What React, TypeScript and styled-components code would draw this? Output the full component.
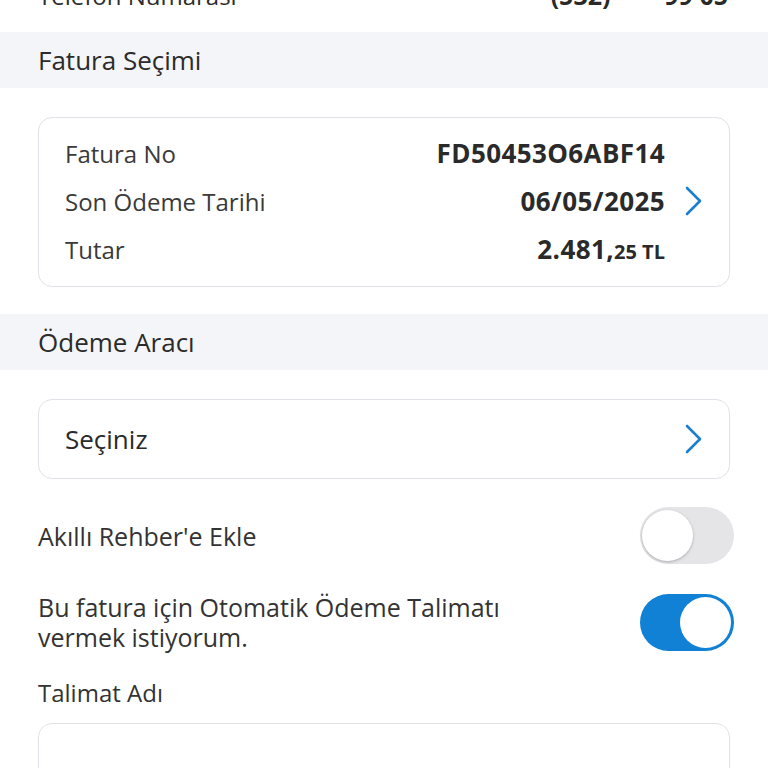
import React from 'react';
import styled, { createGlobalStyle } from 'styled-components';

const GlobalStyle = createGlobalStyle`
  html, body {
    margin: 0;
    padding: 0;
    background: #ffffff;
    font-family: 'Open Sans', 'Noto Sans', sans-serif;
    color: #2d2d2d;
    overflow: hidden;
  }
`;

const Page = styled.div`
  width: 768px;
  height: 768px;
  overflow: hidden;
  display: flex;
  flex-direction: column;

  & > * {
    flex-shrink: 0;
  }
`;

// scrolled list: only the bottom of the phone row is still visible
const TopRow = styled.div`
  display: flex;
  justify-content: space-between;
  align-items: center;
  margin-top: -42px;
  height: 74px;
  padding: 0 40px 0 38px;
  font-size: 24px;
`;

const TopValue = styled.span`
  font-weight: 700;
  font-size: 25px;
  color: #2a2a2a;
`;

const SectionHeader = styled.div<{ $mt?: number }>`
  background: #f4f5f8;
  height: 56px;
  margin-top: ${({ $mt }) => $mt ?? 0}px;
  display: flex;
  align-items: center;
  padding: 0 38px;
  font-size: 26px;
  color: #2b2b2b;
`;

const Card = styled.div<{ $mt: number; $h: number }>`
  margin: ${({ $mt }) => $mt}px 38px 0 38px;
  height: ${({ $h }) => $h}px;
  box-sizing: border-box;
  border: 1.5px solid #dfe2e6;
  border-radius: 14px;
  background: #fff;
`;

const InfoList = styled.div`
  display: flex;
  flex-direction: column;
  padding: 11px 26px 0 26px;
`;

const InfoRow = styled.div`
  display: grid;
  grid-template-columns: 1fr auto 38px;
  align-items: center;
  height: 48px;
  font-size: 24px;
`;

const Label = styled.span`
  color: #3a3a3a;
`;

const Value = styled.span`
  font-weight: 700;
  font-size: 26px;
  letter-spacing: 0.4px;
  color: #2a2a2a;
  text-align: right;
`;

const Small = styled.span`
  font-size: 20px;
  letter-spacing: 0;
`;

const ChevronCell = styled.span`
  display: flex;
  justify-content: flex-end;
  align-items: center;
`;

const SelectInner = styled.div`
  display: flex;
  align-items: center;
  justify-content: space-between;
  height: 100%;
  padding: 0 26px 0 26px;
  font-size: 26px;
  font-weight: 500;
  color: #2a2a2a;
`;

const ToggleRow = styled.div<{ $mt: number }>`
  display: flex;
  align-items: center;
  justify-content: space-between;
  margin-top: ${({ $mt }) => $mt}px;
  padding: 0 34px 0 38px;
  font-size: 25px;
  line-height: 30px;
  color: #333;
`;

const Track = styled.div<{ $on: boolean }>`
  position: relative;
  width: 94px;
  height: 57px;
  flex-shrink: 0;
  border-radius: 29px;
  background: ${({ $on }) => ($on ? '#1181d6' : '#e5e5e8')};
`;

const Knob = styled.div<{ $on: boolean }>`
  position: absolute;
  top: 3px;
  left: ${({ $on }) => ($on ? '40px' : '2px')};
  width: 51px;
  height: 51px;
  border-radius: 50%;
  background: #fff;
  box-shadow: ${({ $on }) => ($on ? 'none' : '0 1px 3px rgba(0,0,0,0.25)')};
`;

const FieldLabel = styled.div`
  margin-top: 24px;
  padding: 0 38px;
  font-size: 24px;
  color: #333;
`;

const Chevron = () => (
  <svg width="20" height="30" viewBox="0 0 20 30" fill="none">
    <path d="M4 2 L17 15 L4 28" stroke="#1a7fd0" strokeWidth="2.6" strokeLinecap="round" strokeLinejoin="round" />
  </svg>
);

const Toggle: React.FC<{ on: boolean }> = ({ on }) => (
  <Track $on={on}>
    <Knob $on={on} />
  </Track>
);

export default function App() {
  return (
    <Page>
      <GlobalStyle />
      <TopRow>
        <span>Telefon Numarası</span>
        <TopValue>(532) *** 99 05</TopValue>
      </TopRow>

      <SectionHeader>Fatura Seçimi</SectionHeader>

      <Card $mt={29} $h={170}>
        <InfoList>
          <InfoRow>
            <Label>Fatura No</Label>
            <Value>FD50453O6ABF14</Value>
            <ChevronCell />
          </InfoRow>
          <InfoRow>
            <Label>Son Ödeme Tarihi</Label>
            <Value>06/05/2025</Value>
            <ChevronCell>
              <Chevron />
            </ChevronCell>
          </InfoRow>
          <InfoRow>
            <Label>Tutar</Label>
            <Value>
              2.481,<Small>25 TL</Small>
            </Value>
            <ChevronCell />
          </InfoRow>
        </InfoList>
      </Card>

      <SectionHeader $mt={27}>Ödeme Aracı</SectionHeader>

      <Card $mt={29} $h={80}>
        <SelectInner>
          <span>Seçiniz</span>
          <Chevron />
        </SelectInner>
      </Card>

      <ToggleRow $mt={28}>
        <span>Akıllı Rehber'e Ekle</span>
        <Toggle on={false} />
      </ToggleRow>

      <ToggleRow $mt={28}>
        <span>
          Bu fatura için Otomatik Ödeme Talimatı
          <br />
          vermek istiyorum.
        </span>
        <Toggle on />
      </ToggleRow>

      <FieldLabel>Talimat Adı</FieldLabel>

      <Card $mt={14} $h={80} />
    </Page>
  );
}
